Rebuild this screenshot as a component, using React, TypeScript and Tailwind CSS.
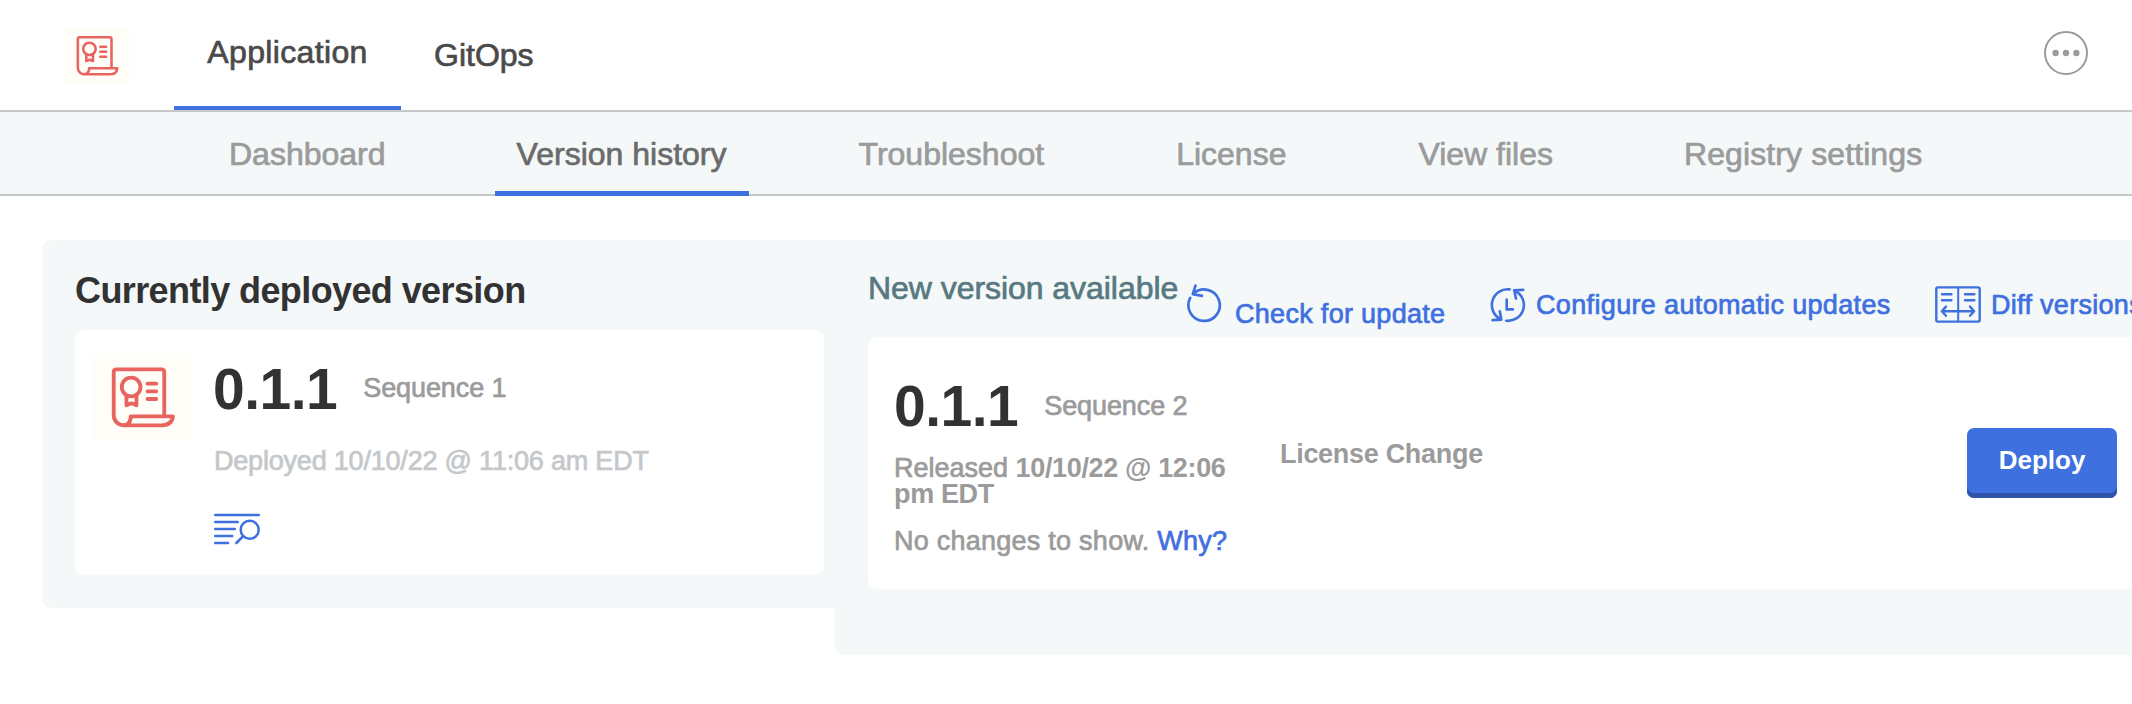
import React from "react";

const medium = "[-webkit-text-stroke:0.7px]";

function ScrollLogo({ className }: { className: string }) {
  return (
    <svg viewBox="0 0 296 258" preserveAspectRatio="none" className={className} fill="none" stroke="#e8645f" strokeWidth="11.5" strokeLinecap="round" strokeLinejoin="round">
      <rect width="296" height="258" fill="#fffdf8" stroke="none" />
      <path d="M213 184V54q0-8-8-8H70q-8 0-8 8v130a30 30 0 0 0 30 30h114q30 0 33-27H113q0 27-25 27" />
      <circle cx="114" cy="99" r="28" />
      <path d="M100 125v29l15-6 15 6v-29M163 89h26M163 112h26M163 135h26" />
    </svg>
  );
}

function LogsIcon() {
  return (
    <svg viewBox="0 0 46 32" className="h-8 w-[46px]" fill="none" stroke="#3f70df" strokeWidth="2.5" strokeLinecap="round">
      <path d="M1.2 2h43.6M1.2 9h22.6M1.2 16h19.6M1.2 23h17.1M1.2 30h12.8M28.8 23.5L22.4 30" />
      <circle cx="35.7" cy="16.8" r="9" />
    </svg>
  );
}

function RefreshIcon() {
  return (
    <svg viewBox="0 0 34 38" className="h-[38px] w-[34px] shrink-0 overflow-visible" fill="none" stroke="#3f70df" strokeWidth="2.7" strokeLinecap="round" strokeLinejoin="round">
      <path d="M3.2 13.9A15.7 15.7 0 1 0 6.1 10M8.5 1.6L5.8 10.1L15 11.8" />
    </svg>
  );
}

function ScheduleIcon() {
  return (
    <svg viewBox="0 0 34 35" className="h-[35px] w-[34px] shrink-0 overflow-visible" fill="none" stroke="#3f70df" strokeWidth="2.6" strokeLinecap="round" strokeLinejoin="round">
      <path d="M18.6 1.4A15.8 15.8 0 0 0 10 31.4M1.5 32.1L10.3 31.6L8.8 23.2M15.2 32.7A15.8 15.8 0 0 0 23.8 2.7M32.2 1.9L23.2 2.3L25 10.6M15.7 11.6v9.8h6.2" />
    </svg>
  );
}

function DiffIcon() {
  return (
    <svg viewBox="0 0 46 37" className="h-[37px] w-[46px] shrink-0" fill="none" stroke="#3f70df" strokeWidth="2.4" strokeLinecap="round" strokeLinejoin="round">
      <rect x="1.3" y="1.4" width="43.4" height="34.2" rx="1.6" />
      <path d="M23.2 2v33" strokeWidth="2" />
      <path d="M7 8.2h9.4M7 14.2h9.4M30 8.2h9.4M30 14.2h9.4M7 25.2h32M11 20.6l-4.2 4.6 4.2 4.6M35 20.6l4.2 4.6-4.2 4.6" />
    </svg>
  );
}

const tabs = [
  { label: "Dashboard", cls: "ml-[229px]" },
  { label: "Troubleshoot", cls: "ml-[110px]" },
  { label: "License", cls: "ml-[132px]" },
  { label: "View files", cls: "ml-[132px]" },
  { label: "Registry settings", cls: "ml-[131px] tracking-[0.1px]" },
];

function Tab({ label, cls }: { label: string; cls: string }) {
  return <a className={`${cls} shrink-0 pt-[23px] text-[#9b9b9b]`}>{label}</a>;
}

export default function App() {
  return (
    <div className={`h-[704px] w-[2132px] overflow-hidden whitespace-nowrap bg-white font-['Liberation_Sans',Arial,sans-serif] font-normal ${medium}`}>
      <header className="flex h-[112px] items-start border-b-2 border-[#c4c8ca] text-[32px] leading-[40px] text-[#4a4a4a]">
        <ScrollLogo className="ml-16 mt-[27px] h-[57px] w-[66px]" />
        <a className="ml-11 flex h-[110px] w-[227px] justify-center border-b-4 border-[#3f70df] pt-8 tracking-[0.35px]">Application</a>
        <a className="ml-[33px] pt-[35px]">GitOps</a>
        <svg viewBox="0 0 44 44" className="ml-auto mr-11 mt-[31px] size-11" fill="#9b9b9b">
          <circle cx="22" cy="22" r="21" fill="none" stroke="#9b9b9b" strokeWidth="2" />
          <circle cx="11.6" cy="22" r="3.2" />
          <circle cx="22" cy="22" r="3.2" />
          <circle cx="32.4" cy="22" r="3.2" />
        </svg>
      </header>

      <nav className="flex h-[84px] items-start bg-[#f4f8f9] text-[32px] leading-[38px] shadow-[inset_0_-2px_0_#c4c8ca]">
        <Tab {...tabs[0]} />
        <a className="ml-[109px] flex h-[84px] w-[254px] shrink-0 justify-center border-b-[5px] border-[#3f70df] pt-[23px] text-[#6b6b6b]">Version history</a>
        {tabs.slice(1).map((t) => (
          <Tab key={t.label} {...t} />
        ))}
      </nav>

      <main className="flex items-start pl-[42px] pt-11">
        <section className="h-[368px] w-[793px] shrink-0 rounded-l-[9px] bg-[#f4f8f9] pl-[33px] pt-[31px]">
          <h2 className="text-[36px] font-bold leading-[40px] tracking-[-0.6px] text-[#323232] [-webkit-text-stroke:0px]">Currently deployed version</h2>
          <div className="mt-[19px] flex h-[245px] w-[749px] rounded-[9px] bg-white pl-[18px] pt-6">
            <ScrollLogo className="h-[86px] w-[99px] shrink-0" />
            <div className="ml-[22px]">
              <div className="-ml-px flex items-start">
                <span className="text-[57px] font-bold leading-[70px] tracking-[-0.5px] text-[#323232] [-webkit-text-stroke:0px]">0.1.1</span>
                <span className="ml-[26px] mt-[19px] text-[27px] leading-[30px] tracking-[-0.1px] text-[#9b9b9b]">Sequence 1</span>
              </div>
              <p className="mt-[22px] text-[27px] leading-[30px] tracking-[-0.2px] text-[#c4c8ca]">Deployed 10/10/22 @ 11:06 am EDT</p>
              <div className="mt-[37px]">
                <LogsIcon />
              </div>
            </div>
          </div>
        </section>

        <section className="h-[415px] w-[1297px] shrink-0 overflow-hidden rounded-bl-[9px] bg-[#f4f8f9] pl-[33px]">
          <div className="flex h-[97px] items-start text-[27px] leading-[30px] text-[#3f70df]">
            <h2 className="w-[319px] shrink-0 pt-7 text-[32px] leading-[40px] tracking-[-0.05px] text-[#577981]">New version available</h2>
            <div className="mt-11">
              <RefreshIcon />
            </div>
            <a className="ml-[14px] mt-[59px] w-[256px] shrink-0 tracking-[0.3px]">Check for update</a>
            <div className="mt-12">
              <ScheduleIcon />
            </div>
            <a className="ml-[11px] mt-[50px] w-[399px] shrink-0 tracking-[0.35px]">Configure automatic updates</a>
            <div className="mt-[46px]">
              <DiffIcon />
            </div>
            <a className="ml-[10px] mt-[50px] shrink-0 tracking-[0.3px]">Diff versions</a>
          </div>
          <div className="flex h-[252px] items-start rounded-l-[9px] bg-white pl-[26px] text-[27px] text-[#9b9b9b]">
            <div className="w-[386px] shrink-0 pt-[34px]">
              <div className="flex items-start">
                <span className="text-[57px] font-bold leading-[70px] tracking-[-0.5px] text-[#323232] [-webkit-text-stroke:0px]">0.1.1</span>
                <span className="ml-[26px] mt-[20px] leading-[30px] tracking-[-0.1px]">Sequence 2</span>
              </div>
              <p className="mt-[14px] leading-[26px]">
                Released <b className="tracking-[-0.35px] [-webkit-text-stroke:0px]">10/10/22 @ 12:06<br />pm EDT</b>
              </p>
              <p className="mt-[19px] leading-[30px] tracking-[0.25px]">
                No changes to show. <a className="text-[#3f70df]">Why?</a>
              </p>
            </div>
            <b className="mt-[102px] leading-[30px] tracking-[-0.3px] [-webkit-text-stroke:0px]">License Change</b>
            <button className="ml-auto mr-[15px] mt-[91px] h-[70px] w-[150px] rounded-[7px] bg-[#3f70df] pb-[5px] text-[26px] font-bold text-white shadow-[inset_0_-5px_0_#3055a8] [-webkit-text-stroke:0px]">Deploy</button>
          </div>
        </section>
      </main>
    </div>
  );
}
